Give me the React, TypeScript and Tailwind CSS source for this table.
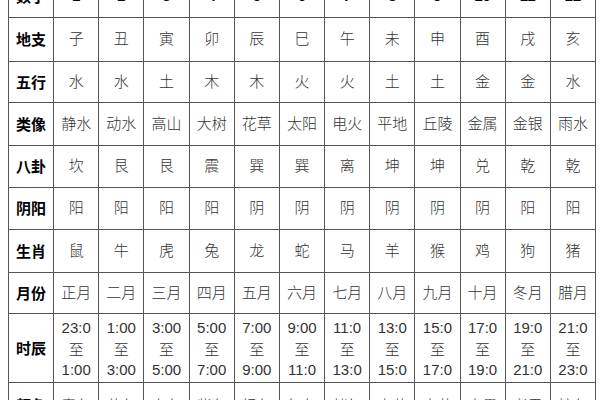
import React from 'react';

const branches = ['子', '丑', '寅', '卯', '辰', '巳', '午', '未', '申', '酉', '戌', '亥'];

const rows: { label: string; cells: string[] }[] = [
  { label: '数字', cells: ['1', '2', '3', '4', '5', '6', '7', '8', '9', '10', '11', '12'] },
  { label: '地支', cells: branches },
  { label: '五行', cells: ['水', '水', '土', '木', '木', '火', '火', '土', '土', '金', '金', '水'] },
  { label: '类像', cells: ['静水', '动水', '高山', '大树', '花草', '太阳', '电火', '平地', '丘陵', '金属', '金银', '雨水'] },
  { label: '八卦', cells: ['坎', '艮', '艮', '震', '巽', '巽', '离', '坤', '坤', '兑', '乾', '乾'] },
  { label: '阴阳', cells: ['阳', '阳', '阳', '阳', '阴', '阴', '阴', '阴', '阴', '阴', '阳', '阳'] },
  { label: '生肖', cells: ['鼠', '牛', '虎', '兔', '龙', '蛇', '马', '羊', '猴', '鸡', '狗', '猪'] },
  { label: '月份', cells: ['正月', '二月', '三月', '四月', '五月', '六月', '七月', '八月', '九月', '十月', '冬月', '腊月'] },
];

const hours: [string, string][] = [
  ['23:0', '1:00'],
  ['1:00', '3:00'],
  ['3:00', '5:00'],
  ['5:00', '7:00'],
  ['7:00', '9:00'],
  ['9:00', '11:0'],
  ['11:0', '13:0'],
  ['13:0', '15:0'],
  ['15:0', '17:0'],
  ['17:0', '19:0'],
  ['19:0', '21:0'],
  ['21:0', '23:0'],
];

const colors = ['青色', '黄色', '白色', '紫色', '绿色', '红色', '赭红', '土黄', '杏黄', '水墨', '老黑', '棕色'];

const cjk = "font-['Noto_Sans_CJK_SC',sans-serif]";

const Label = ({ text }: { text: string }) => (
  <div className={`flex items-center justify-center border-r border-b border-[#555] text-[15px] font-bold text-black ${cjk}`}>
    {text}
  </div>
);

const Cell = ({ text, bold }: { text: string; bold?: boolean }) => (
  <div
    className={`flex items-center justify-center border-r border-b border-[#555] text-[15px] ${
      bold ? 'font-bold text-black' : 'font-light text-[#333]'
    } font-['Liberation_Sans','Noto_Sans_CJK_SC',sans-serif]`}
  >
    {text}
  </div>
);

export default function App() {
  return (
    <div className="h-[400px] w-[600px] overflow-hidden bg-white">
      <div className="ml-2 mt-[-26px] grid w-[588px] grid-cols-[repeat(13,minmax(0,1fr))] grid-rows-[43px_44px_41px_43px_42px_42px_43px_41px_69px_60px] border-l border-t border-[#555]">
        {rows.map((row, i) => (
          <React.Fragment key={row.label}>
            <Label text={row.label} />
            {row.cells.map((c, j) => (
              <Cell key={j} text={c} bold={i === 0} />
            ))}
          </React.Fragment>
        ))}

        <Label text="时辰" />
        {hours.map(([from, to], j) => (
          <div
            key={j}
            className="flex flex-col items-center justify-center border-r border-b border-[#555] text-[15px] leading-[21px] text-[#333] font-['Liberation_Sans','Noto_Sans_CJK_SC',sans-serif]"
          >
            <span>{from}</span>
            <span className={`font-light ${cjk}`}>至</span>
            <span>{to}</span>
          </div>
        ))}

        <div className={`flex items-start justify-center border-r border-b border-[#555] pt-[11px] text-[15px] font-bold text-black ${cjk}`}>
          颜色
        </div>
        {colors.map((c, j) => (
          <div
            key={j}
            className={`flex items-start justify-center border-r border-b border-[#555] pt-[11px] text-[15px] font-light text-[#333] ${cjk}`}
          >
            {c}
          </div>
        ))}
      </div>
    </div>
  );
}
